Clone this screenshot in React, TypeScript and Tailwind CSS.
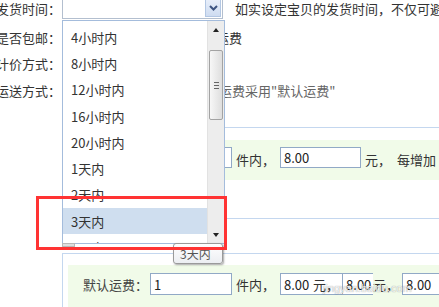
import React from "react";

function Label({ children }: { children: React.ReactNode }) {
  return (
    <div className="w-[61px] shrink-0 flex justify-end whitespace-nowrap text-[#333]">
      {children}
    </div>
  );
}

function Dot() {
  return <span className="inline-block w-[12px] h-[12px] rounded-full border border-[#888] bg-white" />;
}

export default function App() {
  const items = ["4小时内", "8小时内", "12小时内", "16小时内", "20小时内", "1天内", "2天内", "3天内", "4天内"];
  return (
    <div className="relative w-[439px] h-[307px] overflow-hidden bg-white text-[13px] leading-none text-[#333] font-['Noto_Sans_CJK_SC',sans-serif]">
      <div className="flex flex-col">
        {/* row 1 */}
        <div className="flex items-center h-[22px] -mt-[3px]">
          <Label>发货时间：</Label>
          <div className="ml-[1px] w-[161px] h-[22px] border border-[#b3bfcf] bg-white flex justify-end p-[1px] shrink-0">
            <div className="w-[16px] h-full bg-gradient-to-b from-[#e7eefa] to-[#cedcf1] border border-[#b3c7e3] flex items-center justify-center">
              <svg width="9" height="6" viewBox="0 0 9 6">
                <polyline points="1,1 4.5,4.5 8,1" fill="none" stroke="#3d5482" strokeWidth="2" />
              </svg>
            </div>
          </div>
          <span className="ml-[12px] whitespace-nowrap">如实设定宝贝的发货时间，不仅可避免发货咨询和纠纷</span>
        </div>
        {/* row 2 */}
        <div className="flex items-center h-[20px] mt-[8px]">
          <Label>是否包邮：</Label>
          <div className="pl-[5px] flex items-center whitespace-nowrap">
            <Dot />
            <span className="ml-[4px]">自定义运费</span>
            <span className="ml-[1px]"><Dot /></span>
            <span className="ml-[4px]">卖家承担运费</span>
          </div>
        </div>
        {/* row 3 */}
        <div className="flex items-center h-[20px] mt-[6px]">
          <Label>计价方式：</Label>
          <div className="pl-[5px] flex items-center whitespace-nowrap">
            <Dot />
            <span className="ml-[4px]">按件数</span>
            <span className="ml-[10px]"><Dot /></span>
            <span className="ml-[4px]">按重量</span>
          </div>
        </div>
        {/* row 4 */}
        <div className="flex items-center h-[20px] mt-[7px]">
          <Label>运送方式：</Label>
          <span className="pl-[2px] whitespace-nowrap text-[#666]">除指定地区外，其余地区的运费采用"默认运费"</span>
        </div>
        {/* box 1 */}
        <div className="mt-[27px] ml-[62px] h-[92px] border-t border-l border-b border-[#c4d7ef] pt-[12px]">
          <div className="ml-[5px] h-[40px] bg-[#f1fbe9] flex items-start pt-[7px] pl-[15px] whitespace-nowrap">
            <span className="h-[21px] flex items-center text-[#444]">默认运费：</span>
            <div className="ml-[2px] w-[82px] h-[21px] border border-[#91a9c6] bg-white flex items-center pl-[3px] text-[#222] shrink-0">1</div>
            <span className="ml-[4px] h-[24px] flex items-center">件内，</span>
            <div className="ml-[5px] w-[81px] h-[21px] border border-[#91a9c6] bg-white flex items-center pl-[3px] text-[#222] shrink-0">8.00</div>
            <span className="ml-[4px] h-[24px] flex items-center">元，</span>
            <span className="ml-[6px] h-[24px] flex items-center">每增加</span>
          </div>
        </div>
        {/* box 2 */}
        <div className="mt-[34px] ml-[62px] h-[60px] border-t border-l border-[#c4d7ef] pt-[11px]">
          <div className="ml-[5px] h-[48px] bg-[#f1fbe9] flex items-start pt-[8px] pl-[15px] whitespace-nowrap">
            <span className="h-[22px] flex items-center text-[#444]">默认运费：</span>
            <div className="ml-[2px] w-[82px] h-[22px] border border-[#91a9c6] bg-white flex items-center pl-[3px] text-[#222] shrink-0">1</div>
            <span className="ml-[4px] h-[22px] flex items-center">件内，</span>
            <div className="ml-[5px] w-[81px] h-[22px] border border-[#91a9c6] bg-white flex items-center pl-[3px] text-[#222] shrink-0">8.00</div>
            <span className="relative z-10 -ml-[48px] h-[22px] flex items-center">元，</span>
            <div className="ml-[3px] w-[31px] h-[22px] border border-r-0 border-[#91a9c6] bg-white flex items-center pl-[3px] text-[#222] shrink-0">8.00</div>
            <span className="h-[22px] flex items-center">元，</span>
            <div className="ml-[3px] w-[60px] h-[22px] border border-[#91a9c6] bg-white flex items-center pl-[3px] text-[#222] shrink-0">8.00</div>
          </div>
        </div>
      </div>

      {/* dropdown list */}
      <div className="absolute left-[62px] top-[20px] w-[163px] h-[224px] border border-[#a4bcdc] bg-white flex">
        <div className="flex-1 overflow-hidden pt-[3px]">
          {items.map((t, i) => (
            <div
              key={t}
              className={`h-[26.3px] flex items-center pl-[8px] whitespace-nowrap ${i === 7 ? "bg-[#cfdeef]" : ""}`}
            >
              {t}
            </div>
          ))}
        </div>
        <div className="w-[17px] bg-[#ededed] border-l border-[#e2e2e2] flex flex-col">
          <div className="h-[17px] flex items-center justify-center">
            <div className="w-0 h-0 border-l-[3px] border-r-[3px] border-b-[4px] border-l-transparent border-r-transparent border-b-[#222]" />
          </div>
          <div className="mt-[12px] mx-[1px] h-[70px] rounded-[2px] border border-[#a3a3a3] bg-gradient-to-r from-[#f7f7f7] to-[#dedede] flex flex-col items-center justify-center gap-[2px]">
            <div className="w-[5px] h-px bg-[#666]" />
            <div className="w-[5px] h-px bg-[#666]" />
            <div className="w-[5px] h-px bg-[#666]" />
          </div>
          <div className="flex-1" />
          <div className="h-[17px] flex items-center justify-center">
            <div className="w-0 h-0 border-l-[3px] border-r-[3px] border-t-[4px] border-l-transparent border-r-transparent border-t-[#222]" />
          </div>
        </div>
      </div>

      {/* small grey piece */}
      <div className="absolute left-[62px] top-[243px] w-[13px] h-[4px] bg-[#dedede] border border-[#b8b8b8]" />

      {/* tooltip */}
      <div className="absolute left-[173px] top-[243px] w-[50px] h-[21px] border border-[#9a9a9a] rounded-[3px] bg-gradient-to-b from-white to-[#eceef2] shadow-[1px_1px_2px_rgba(0,0,0,0.35)] text-[12px] text-[#555] pl-[6px] flex items-center">
        3天内
      </div>

      {/* red annotation */}
      <div className="absolute left-[36px] top-[196px] w-[191px] h-[54px] border-[3px] border-[#ff3333]" />

      {/* watermark */}
      <div className="absolute left-[323px] top-[283px] text-[11px] leading-none text-white/90 font-['Liberation_Sans',sans-serif] [text-shadow:0_0_1px_rgba(0,0,0,0.5)]">
        jingyan.baidu.com
      </div>
    </div>
  );
}
